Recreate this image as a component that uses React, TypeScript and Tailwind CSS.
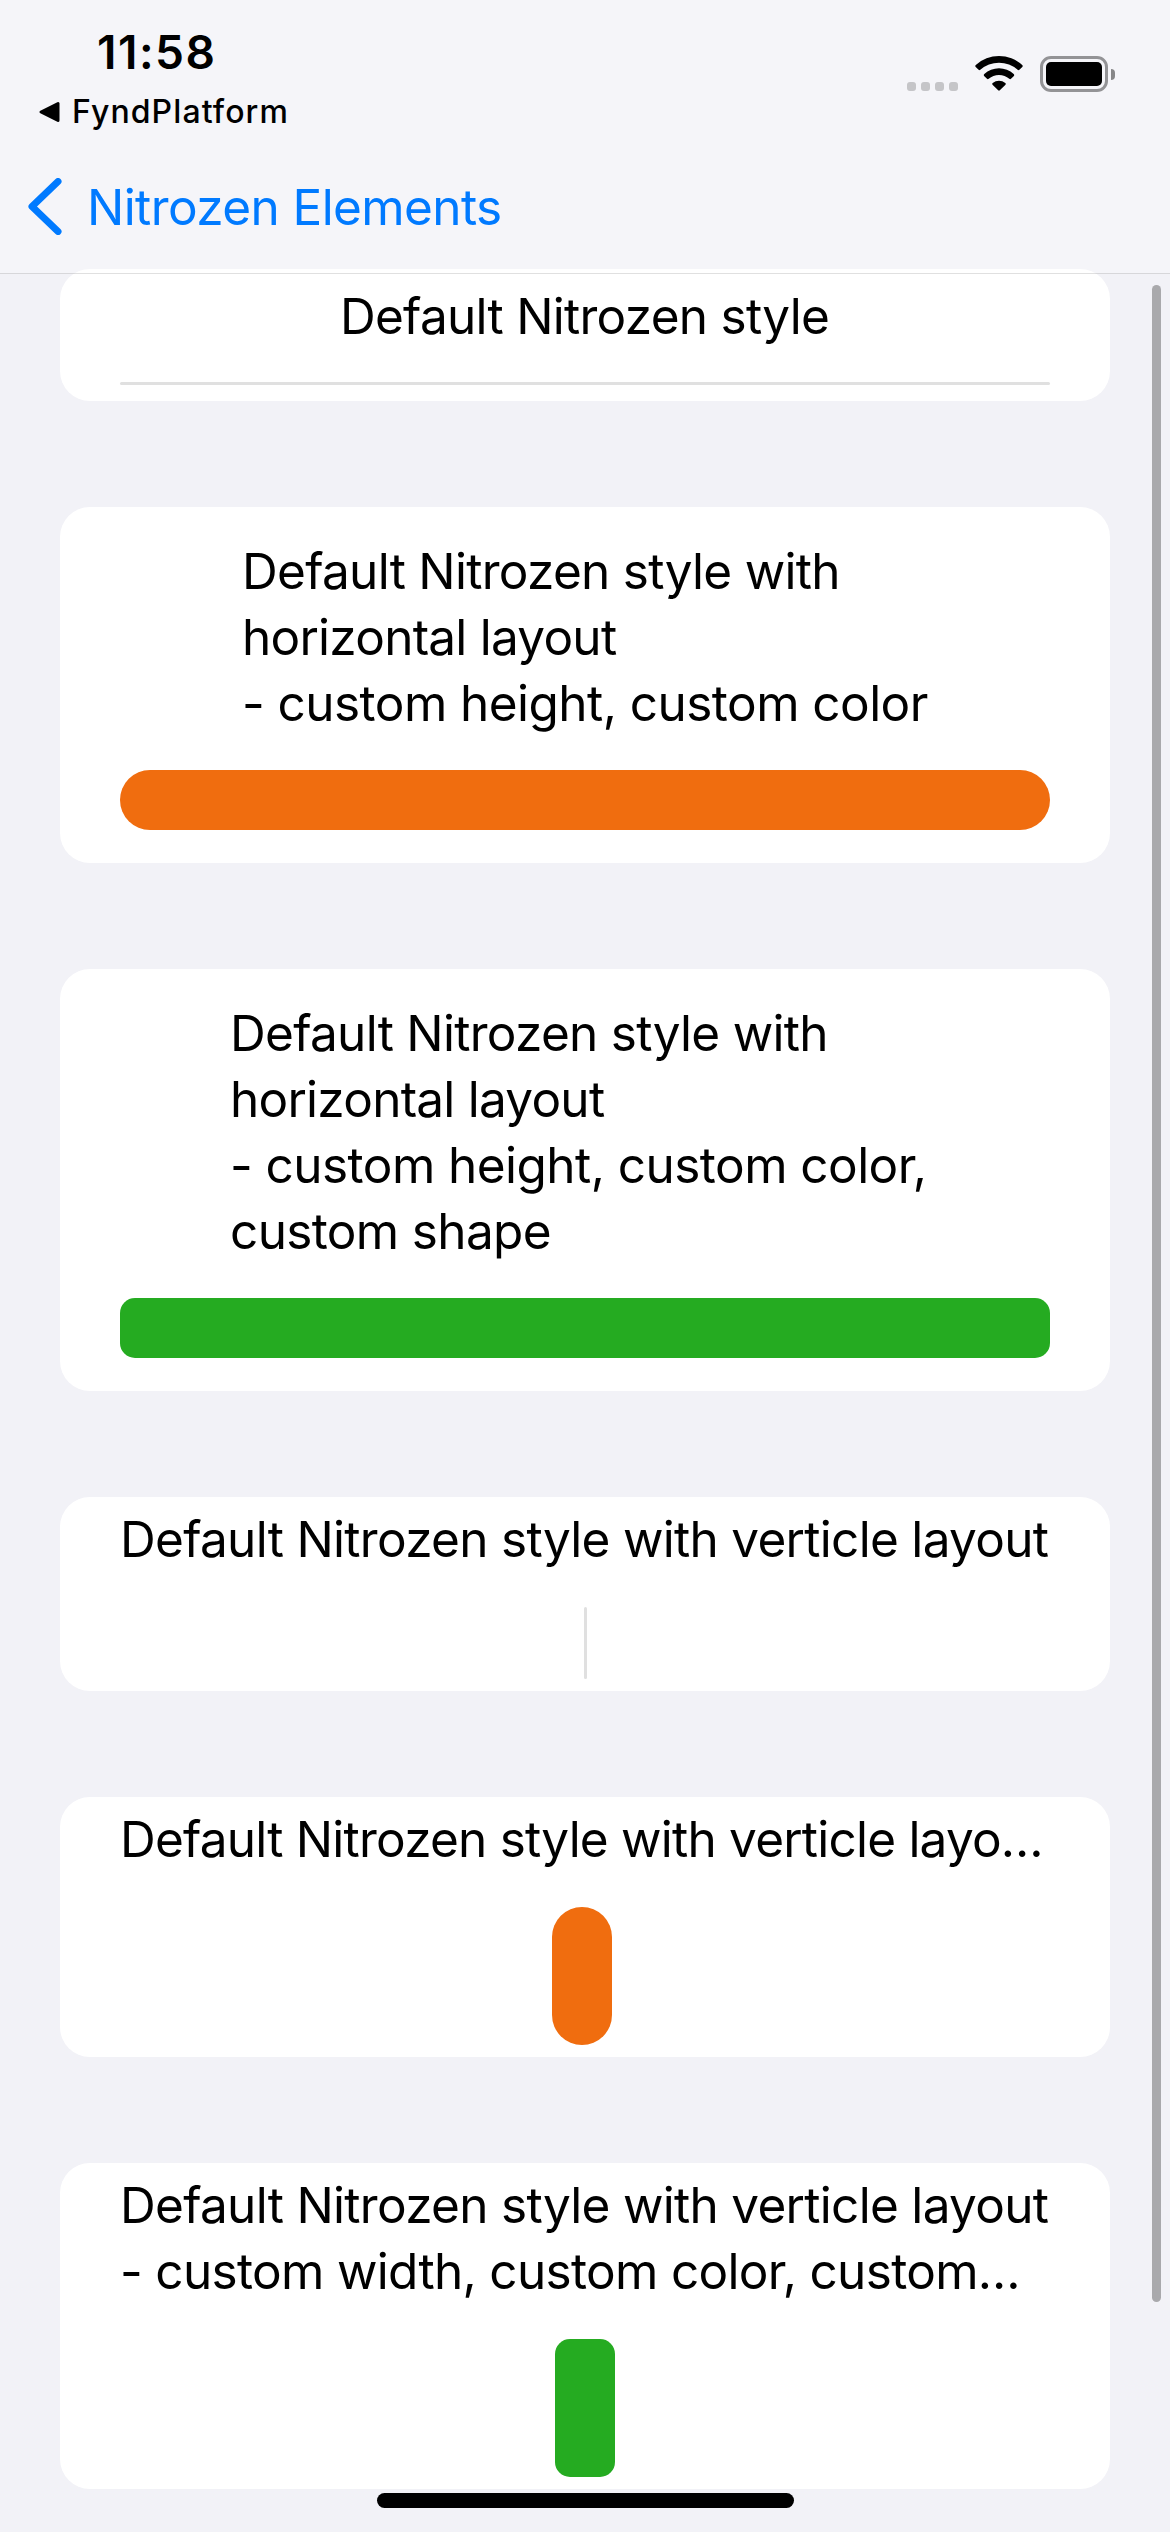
import type { ReactNode } from "react";

function StatusBar() {
  return (
    <div className="flex h-[140px] justify-between pr-[55px] pl-[38px]">
      <div className="flex flex-col">
        <div className="mt-[24px] ml-[59px] text-[46px] leading-[56px] font-semibold tracking-[1.500px]">11:58</div>
        <div className="mt-[12px] flex items-center gap-[11px]">
          <svg className="h-[22px] w-[23px]" viewBox="0 0 23 22">
            <path d="M3 11 20 2.500V19.500Z" fill="black" stroke="black" strokeWidth="3" strokeLinejoin="round" />
          </svg>
          <span className="text-[32px] leading-[40px] font-medium tracking-[1.100px]">FyndPlatform</span>
        </div>
      </div>
      <div className="mt-[55px] flex h-[37px] items-start">
        <div className="mt-[27px] flex gap-[5px]">
          <i className="size-[9px] rounded-[3px] bg-[#c5c5c8]" />
          <i className="size-[9px] rounded-[3px] bg-[#c5c5c8]" />
          <i className="size-[9px] rounded-[3px] bg-[#c5c5c8]" />
          <i className="size-[9px] rounded-[3px] bg-[#c5c5c8]" />
        </div>
        <svg className="ml-[17px] h-[36px] w-[48px]" viewBox="0 0 48 36">
          <path d="M.8 10A34.500 34.500 0 0 1 47.200 10Q48.200 11 47.300 11.900L44.400 14.800Q43.600 15.600 42.700 14.800A28 28 0 0 0 5.300 14.800Q4.400 15.600 3.600 14.800L.7 11.900Q-.2 11 .8 10Z" />
          <path d="M9.300 19A21.500 21.500 0 0 1 38.700 19Q39.800 20 38.900 20.900L36 23.800Q35.200 24.600 34.300 23.800A15.500 15.500 0 0 0 13.700 23.800Q12.800 24.600 12 23.800L9.100 20.900Q8.200 20 9.300 19Z" />
          <path d="M17.700 28A10 10 0 0 1 30.300 28Q31.300 28.800 30.500 29.700L24.800 35.300Q24 36 23.200 35.300L17.500 29.700Q16.700 28.800 17.700 28Z" />
        </svg>
        <div className="mt-px ml-[17px] h-[36px] w-[68px] rounded-[11px] border-[3px] border-[#939396] p-[3px]">
          <div className="h-full rounded-[5px] bg-black" />
        </div>
        <div className="mt-[14px] ml-[3px] h-[11px] w-[4px] rounded-r-full bg-[#868688]" />
      </div>
    </div>
  );
}

function NavBar() {
  return (
    <div className="flex h-[133px] items-center gap-[25px] pl-[28px] text-[#007aff]">
      <svg className="h-[57px] w-[34px]" viewBox="0 0 34 57" fill="none">
        <path d="M30 3.500 4 28.500 30 53.500" stroke="currentColor" strokeWidth="7" strokeLinecap="round" strokeLinejoin="round" />
      </svg>
      <span className="text-[49.500px] leading-[66px] tracking-[-0.600px]">Nitrozen Elements</span>
    </div>
  );
}

type Line = { text: string; tracking: string };

type CardProps = { className: string; labelClassName: string; lines: Line[]; children: ReactNode };

function Card({ className, labelClassName, lines, children }: CardProps) {
  return (
    <section className={`flex flex-col items-center rounded-[30px] bg-white px-[60px] ${className}`}>
      <div className={`self-start text-[49.500px] leading-[66px] whitespace-nowrap ${labelClassName}`}>
        {lines.map((line) => (
          <p key={line.text} className={line.tracking}>
            {line.text}
          </p>
        ))}
      </div>
      {children}
    </section>
  );
}

const styleWith: Line = { text: "Default Nitrozen style with", tracking: "tracking-[-0.710px]" };
const horizontal: Line = { text: "horizontal layout", tracking: "tracking-[-0.750px]" };
const verticle: Line = { text: "Default Nitrozen style with verticle layout", tracking: "tracking-[-0.700px]" };

export default function App() {
  return (
    <div className="relative h-[2532px] w-[1170px] overflow-hidden bg-[#f2f2f7] font-[Inter,sans-serif] text-black">
      <header className="relative z-10 h-[274px] border-b border-black/12 bg-white/25">
        <StatusBar />
        <NavBar />
      </header>

      <main className="-mt-[5px] flex flex-col gap-[106px] px-[60px]">
        <Card
          className="h-[132px] pt-[14px]"
          labelClassName="ml-[220px]"
          lines={[{ text: "Default Nitrozen style", tracking: "tracking-[-0.730px]" }]}
        >
          <div className="mt-[33px] h-[3px] w-full rounded-full bg-[#e0e0e0]" />
        </Card>
        <Card
          className="h-[356px] pt-[31px]"
          labelClassName="ml-[122px]"
          lines={[
            styleWith,
            horizontal,
            { text: "- custom height, custom color", tracking: "tracking-[-0.550px]" },
          ]}
        >
          <div className="mt-[34px] h-[60px] w-full rounded-[30px] bg-[#f06d0f]" />
        </Card>
        <Card
          className="h-[422px] pt-[31px]"
          labelClassName="ml-[110px]"
          lines={[
            styleWith,
            horizontal,
            { text: "- custom height, custom color,", tracking: "tracking-[-0.550px]" },
            { text: "custom shape", tracking: "tracking-[-0.650px]" },
          ]}
        >
          <div className="mt-[34px] h-[60px] w-full rounded-[15px] bg-[#25ab21]" />
        </Card>
        <Card className="h-[194px] pt-[9px]" labelClassName="ml-0" lines={[verticle]}>
          <div className="mt-[35px] h-[72px] w-[3px] rounded-full bg-[#e0e0e0]" />
        </Card>
        <Card
          className="h-[260px] pt-[9px]"
          labelClassName="ml-0"
          lines={[{ text: "Default Nitrozen style with verticle layo…", tracking: "tracking-[-0.780px]" }]}
        >
          <div className="mt-[35px] mr-[6px] h-[138px] w-[60px] rounded-[30px] bg-[#f06d0f]" />
        </Card>
        <Card
          className="h-[326px] pt-[9px]"
          labelClassName="ml-0"
          lines={[
            verticle,
            { text: "- custom width, custom color, custom…", tracking: "tracking-[-0.680px]" },
          ]}
        >
          <div className="mt-[35px] h-[138px] w-[60px] rounded-[15px] bg-[#25ab21]" />
        </Card>
      </main>

      <div className="absolute top-[285px] right-[9px] h-[2017px] w-[9px] rounded-full bg-[#a9a9ac]" />
      <div className="absolute bottom-[24px] left-[377px] h-[15px] w-[417px] rounded-full bg-black" />
    </div>
  );
}
